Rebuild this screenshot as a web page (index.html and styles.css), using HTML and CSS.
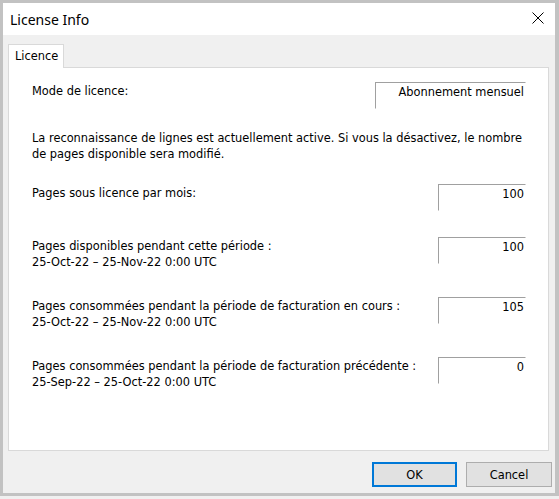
FILE: index.html
```html
<!DOCTYPE html>
<html lang="fr">
<head>
    <meta charset="UTF-8">
    <meta name="viewport" content="width=device-width, initial-scale=1.0">
    <title>License Info</title>
    <link rel="stylesheet" href="styles.css">
</head>
<body>
    <div class="dialog">
        <div class="titlebar">
            <span class="title">License Info</span>
            <span class="close">
                <svg width="12" height="12" viewBox="0 0 12 12"><path d="M0.5 0.5 L11.5 11.5 M11.5 0.5 L0.5 11.5" stroke="#000" stroke-width="1" fill="none"/></svg>
            </span>
        </div>

        <div class="content">
            <div class="tabs">
                <div class="tab active">Licence</div>
            </div>
            <div class="panel">
                <div class="row row-mode">
                    <div class="label">Mode de licence:</div>
                    <div class="field field-wide">Abonnement mensuel</div>
                </div>

                <p class="note">La reconnaissance de lignes est actuellement active. Si vous la désactivez, le nombre de pages disponible sera modifié.</p>

                <div class="row row-month">
                    <div class="label">Pages sous licence par mois:</div>
                    <div class="field">100</div>
                </div>

                <div class="row row-avail">
                    <div class="label">Pages disponibles pendant cette période :<br>25-Oct-22 – 25-Nov-22 0:00 UTC</div>
                    <div class="field">100</div>
                </div>

                <div class="row row-used">
                    <div class="label">Pages consommées pendant la période de facturation en cours :<br>25-Oct-22 – 25-Nov-22 0:00 UTC</div>
                    <div class="field">105</div>
                </div>

                <div class="row row-prev">
                    <div class="label">Pages consommées pendant la période de facturation précédente :<br>25-Sep-22 – 25-Oct-22 0:00 UTC</div>
                    <div class="field">0</div>
                </div>
            </div>
        </div>

        <div class="footer">
            <button class="btn btn-default">OK</button>
            <button class="btn">Cancel</button>
        </div>
    </div>
</body>
</html>
```

FILE: styles.css
```css
html, body {
    margin: 0;
    padding: 0;
}

body {
    background-color: #f0f0f0;
    width: 559px;
    height: 499px;
    overflow: hidden;
    font-family: "DejaVu Sans", Verdana, sans-serif;
    font-size: 11.4px;
    color: #000;
}

.dialog {
    box-sizing: border-box;
    width: 559px;
    height: 496px;
    border-style: solid;
    border-color: #c2c2c2;
    border-width: 3px 4px 3px 3px;
    background-color: #f0f0f0;
    display: flex;
    flex-direction: column;
}

.titlebar {
    height: 32px;
    background-color: white;
    display: flex;
    align-items: center;
    justify-content: space-between;
}

.title {
    font-family: "Noto Sans", "Open Sans", sans-serif;
    font-size: 14px;
    padding-left: 7px;
    color: #000;
}

.close {
    display: flex;
    margin-right: 11px;
    margin-top: -3px;
}

.content {
    padding: 9px 6px 0 5px;
    display: flex;
    flex-direction: column;
}

.tabs {
    display: flex;
}

.tab {
    position: relative;
    z-index: 1;
    box-sizing: border-box;
    width: 56px;
    height: 24px;
    padding-left: 6px;
    line-height: 22px;
    border: 1px solid #d9d9d9;
    border-bottom: none;
    background-color: white;
    margin-bottom: -1px;
}

.panel {
    box-sizing: border-box;
    height: 384px;
    border: 1px solid #d9d9d9;
    background-color: white;
    padding: 14px 22px 0 23px;
    line-height: 16px;
}

.row {
    display: flex;
    justify-content: space-between;
    align-items: flex-start;
}

.label {
    padding-top: 1px;
}

.field {
    box-sizing: border-box;
    width: 88px;
    height: 27px;
    border: 1px solid;
    border-color: #a0a0a0 white white #a0a0a0;
    padding: 1px 1px 0 0;
    text-align: right;
}

.field-wide {
    width: 151px;
}

.note {
    margin: 21px 0 0 0;
    width: 496px;
}

.row-month {
    margin-top: 22px;
}

.row-avail {
    margin-top: 26px;
}

.row-used,
.row-prev {
    margin-top: 27px;
}

.footer {
    display: flex;
    justify-content: flex-end;
    gap: 9px;
    padding: 11px 3px 0 0;
}

.btn {
    box-sizing: border-box;
    width: 86px;
    height: 25px;
    font-family: "DejaVu Sans", Verdana, sans-serif;
    font-size: 11.4px;
    color: #000;
    background-color: #e1e1e1;
    border: 1px solid #adadad;
    padding: 0;
}

.btn-default {
    width: 85px;
    border: 2px solid #0078d7;
}
```
